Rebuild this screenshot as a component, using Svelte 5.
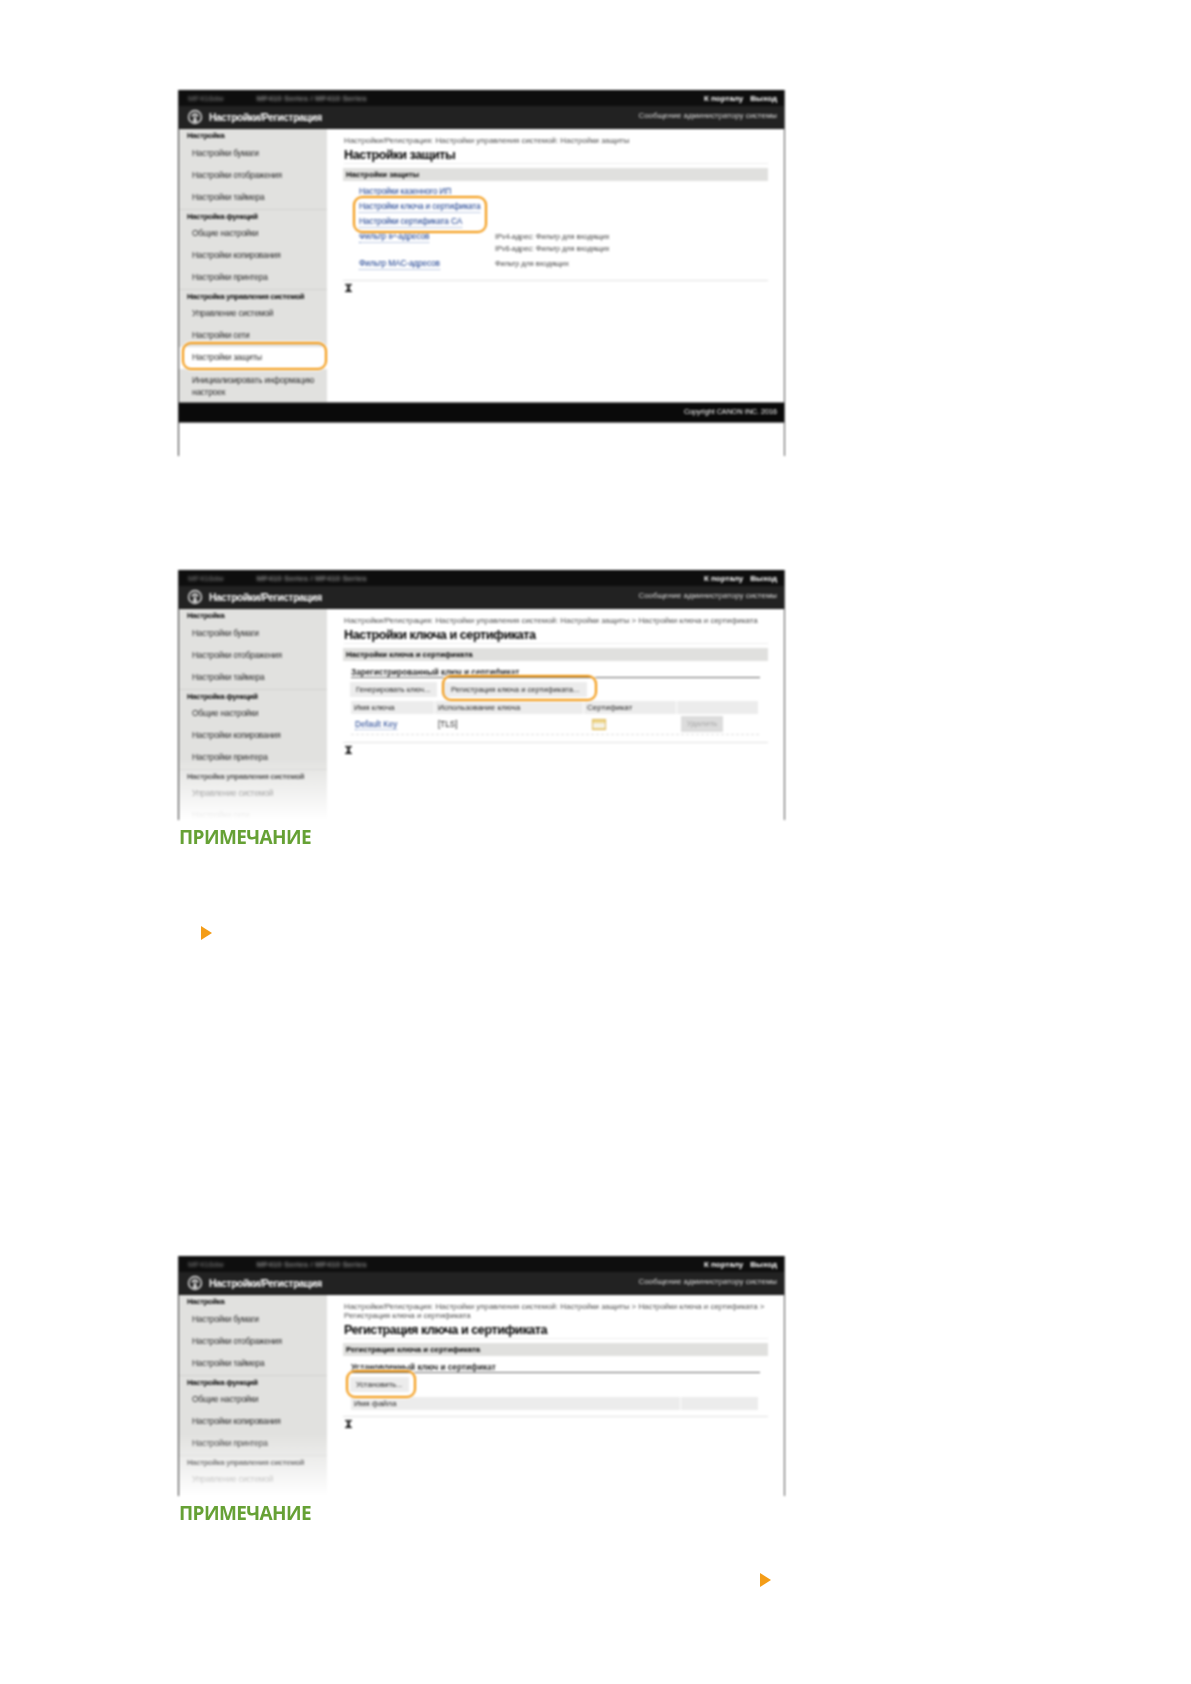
<script>
	const groups = [
		{ title: 'Настройка', items: ['Настройки бумаги', 'Настройки отображения', 'Настройки таймера'] },
		{ title: 'Настройка функций', items: ['Общие настройки', 'Настройки копирования', 'Настройки принтера'] },
		{
			title: 'Настройка управления системой',
			items: ['Управление системой', 'Настройки сети', 'Настройки защиты', 'Инициализировать информацию настроек']
		}
	];
	// how many menu items each crop of the screen still shows
	const visible = { full: 10, 'cut-a': 8, 'cut-b': 7 };
	const base = 'Настройки/Регистрация: Настройки управления системой: Настройки защиты';

	function itemsFor(kind, groupIndex) {
		const before = groups.slice(0, groupIndex).reduce((n, g) => n + g.items.length, 0);
		return groups[groupIndex].items.slice(0, Math.max(0, visible[kind] - before));
	}
</script>

{#snippet frame(kind, crumb, body)}
	<div class="shot {kind}">
		<div class="topbar">
			<span class="device"><span>MF416dw</span><span class="model">MF410 Series / MF410 Series</span></span>
			<span class="toplinks"><span>К порталу</span><span>Выход</span></span>
		</div>
		<div class="header">
			<svg class="logo" viewBox="0 0 16 16" width="16" height="16">
				<circle cx="8" cy="8" r="6.4" fill="none" stroke="#d4d4d4" stroke-width="1.6" />
				<path d="M8 4.2C9.8 4.2 11.4 5.6 11.8 7.6L9.6 7.6C9.4 6.8 8.8 6.3 8 6.3S6.6 6.8 6.4 7.6L4.2 7.6C4.6 5.6 6.2 4.2 8 4.2Z" fill="#e4e4e4" />
				<path d="M6.6 9.2H9.4L10.6 13.4H5.4Z" fill="#ccc" />
				<circle cx="8" cy="8.2" r="1" fill="#fff" />
			</svg>
			<span class="app-title">Настройки/Регистрация</span>
			<span class="admin">Сообщение администратору системы</span>
		</div>
		<div class="columns">
			<nav class="side">
				{#each groups as g, gi}
					<div class="side-head">{g.title}</div>
					{#each itemsFor(kind, gi) as item}
						<div class="side-item" class:wrap={item.startsWith('Иници')} class:sel={kind === 'full' && item === 'Настройки защиты'}>{item}</div>
					{/each}
				{/each}
			</nav>
			<div class="main">
				<div class="crumb">{crumb}</div>
				{@render body()}
			</div>
		</div>
		{#if kind === 'full'}
			<div class="footer">Copyright CANON INC. 2016</div>
		{/if}
	</div>
{/snippet}

{#snippet gotop()}
	<svg class="gotop" viewBox="0 0 7 8" width="7" height="8">
		<path d="M0 0H7V1H0ZM0 7H7V8H0ZM1 1.5H6L4 4 6 6.8H1L3 4Z" fill="#000" />
	</svg>
{/snippet}

{#snippet security()}
	<h2>Настройки защиты</h2>
	<div class="bar">Настройки защиты</div>
	<div class="links">
		<a>Настройки казенного ИП</a><span></span>
		<a>Настройки ключа и сертификата</a><span></span>
		<a>Настройки сертификата CA</a><span></span>
		<a>Фильтр IP-адресов</a><span class="desc">IPv4-адрес: Фильтр для входящих<br />IPv6-адрес: Фильтр для входящих</span>
		<a>Фильтр MAC-адресов</a><span class="desc">Фильтр для входящих</span>
	</div>
	<div class="rule r1"></div>
	{@render gotop()}
{/snippet}

{#snippet keys()}
	<h2>Настройки ключа и сертификата</h2>
	<div class="bar">Настройки ключа и сертификата</div>
	<div class="sub">Зарегистрированный ключ и сертификат</div>
	<div class="btns">
		<span class="btn b1">Генерировать ключ...</span>
		<span class="btn b2">Регистрация ключа и сертификата...</span>
	</div>
	<div class="tr th">
		<span class="c1">Имя ключа</span><span class="c2">Использование ключа</span><span class="c3">Сертификат</span><span class="c4"></span>
	</div>
	<div class="tr td">
		<span class="c1"><a>Default Key</a></span><span class="c2">[TLS]</span>
		<span class="c3"><i class="cert"></i></span>
		<span class="c4"><span class="del">Удалить</span></span>
	</div>
	<div class="rule r2"></div>
	{@render gotop()}
{/snippet}

{#snippet register()}
	<h2>Регистрация ключа и сертификата</h2>
	<div class="bar">Регистрация ключа и сертификата</div>
	<div class="sub">Установленный ключ и сертификат</div>
	<div class="btns"><span class="btn b3">Установить...</span></div>
	<div class="tr th file"><span class="f1">Имя файла</span><span class="f2"></span></div>
	<div class="rule r3"></div>
	{@render gotop()}
{/snippet}

<div class="page">
	<section class="fig">
		{@render frame('full', base, security)}
		<i class="oval o1"></i>
		<i class="oval o2"></i>
	</section>

	<section class="fig second">
		{@render frame('cut-a', base + ' > Настройки ключа и сертификата', keys)}
		<i class="oval o3"></i>
	</section>
	<h3 class="note">ПРИМЕЧАНИЕ</h3>
	<div class="arrow a1"></div>

	<section class="fig third">
		{@render frame('cut-b', base + ' > Настройки ключа и сертификата > Регистрация ключа и сертификата', register)}
		<i class="oval o4"></i>
	</section>
	<h3 class="note">ПРИМЕЧАНИЕ</h3>
	<div class="arrow a2"></div>
</div>

<style>
	:global(body) {
		margin: 0;
		background: #fff;
	}
	.page {
		height: 1684px;
		box-sizing: border-box;
		padding: 90px 0 0 178px;
		font-family: 'Liberation Sans', Arial, sans-serif;
	}
	.fig {
		position: relative;
		width: 607px;
		filter: blur(0.8px);
	}
	.second { margin-top: 114px; }
	.third { margin-top: 316px; }
	.shot {
		position: relative;
		box-sizing: border-box;
		overflow: hidden;
		border-left: 1px solid #333;
		border-right: 1px solid #555;
		background: #fff;
	}
	.full { height: 366px; }
	.cut-a { height: 250px; }
	.cut-b { height: 240px; }
	.cut-a::after,
	.cut-b::after {
		content: '';
		position: absolute;
		left: -1px;
		right: -1px;
		bottom: 0;
		height: 62px;
		background: linear-gradient(rgba(255, 255, 255, 0), #fff);
	}

	.topbar {
		display: flex;
		align-items: center;
		justify-content: space-between;
		height: 16px;
		margin: 0 -1px;
		padding: 0 8px 0 10px;
		background: #0e0e0e;
		font-size: 8px;
		color: #fff;
	}
	.device {
		display: flex;
		gap: 33px;
		font-size: 8.1px;
		color: #888;
		filter: blur(1px);
	}
	.model { font-weight: bold; }
	.toplinks {
		display: flex;
		gap: 7px;
		font-weight: bold;
	}
	.header {
		display: flex;
		align-items: center;
		height: 22px;
		margin: 0 -1px;
		padding: 0 8px 0 9px;
		background: #222;
		border-bottom: 1px solid #111;
	}
	.logo { margin-right: 6px; }
	.app-title {
		font-size: 10.2px;
		font-weight: bold;
		letter-spacing: -0.36px;
		color: #fff;
	}
	.admin {
		margin-left: auto;
		font-size: 7.9px;
		color: #ddd;
		padding-bottom: 3px;
	}

	.columns { display: flex; }
	.side {
		flex: none;
		width: 148px;
		height: 274px;
		background: #e1e1df;
		overflow: hidden;
	}
	.side-head {
		box-sizing: border-box;
		height: 14px;
		padding-left: 8px;
		border-top: 1px solid #d2d2d0;
		font-size: 7.6px;
		font-weight: bold;
		letter-spacing: -0.25px;
		line-height: 13px;
		color: #000;
	}
	.side-head:first-child { border-top: 0; }
	.side-item {
		display: flex;
		align-items: center;
		height: 22px;
		padding: 0 8px 2px 13px;
		box-sizing: border-box;
		font-size: 8.4px;
		letter-spacing: -0.22px;
		color: #2a2a2a;
	}
	.side-item.wrap {
		height: 34px;
		padding-bottom: 0;
		line-height: 12px;
	}
	.side-item.sel { background: #fff; }

	.main {
		flex: 1;
		min-width: 0;
		padding: 7px 16px 0 17px;
	}
	.crumb {
		font-size: 7.9px;
		line-height: 9px;
		color: #4a4a4a;
	}
	h2 {
		box-sizing: border-box;
		height: 16px;
		margin: 3px 0 4px;
		border-bottom: 1px solid #eee;
		font-size: 12.6px;
		font-weight: bold;
		letter-spacing: -0.44px;
		line-height: 14px;
		color: #000;
	}
	.bar {
		height: 13px;
		padding-left: 3px;
		margin-left: -1px;
		background: #e0e0de;
		font-size: 7.8px;
		font-weight: bold;
		line-height: 13px;
		color: #000;
	}
	a {
		color: #14398c;
		border-bottom: 1px dotted #7f97c8;
	}
	.links {
		display: grid;
		grid-template-columns: 136px 1fr;
		row-gap: 3px;
		align-items: start;
		padding: 5px 0 0 15px;
		font-size: 8.4px;
		letter-spacing: -0.18px;
		line-height: 12px;
	}
	.links a { justify-self: start; line-height: 11px; }
	.desc {
		font-size: 7.4px;
		letter-spacing: -0.08px;
		color: #444;
	}
	.rule { height: 0; border-top: 1px solid #e0e0e0; margin-left: -1px; }
	.r1 { margin-top: 10px; }
	.r2 { margin-top: 7px; }
	.r3 { margin-top: 6px; }
	.gotop {
		display: block;
		margin: 3px 0 0 1px;
	}

	.sub {
		box-sizing: border-box;
		height: 11px;
		margin: 6px 8px 0 7px;
		border-bottom: 1px solid #666;
		font-size: 8.2px;
		font-weight: bold;
		line-height: 11px;
		color: #222;
	}
	.btns {
		display: flex;
		gap: 5px;
		margin: 4px 8px 0 6px;
	}
	.btn {
		box-sizing: border-box;
		height: 15px;
		padding-left: 6px;
		background: #ececec;
		font-size: 7.6px;
		line-height: 15px;
		color: #222;
		white-space: nowrap;
		overflow: hidden;
	}
	.b1 { width: 87px; }
	.b2 { width: 145px; padding-left: 9px; }
	.b3 { width: 59px; }
	.tr {
		display: flex;
		margin: 0 9px 0 7px;
		font-size: 8px;
		color: #222;
	}
	.th {
		height: 13px;
		margin-top: 4px;
		line-height: 13px;
		color: #222;
	}
	.th > span {
		box-sizing: border-box;
		background: #ececec;
		border-right: 1px solid #fff;
		padding-left: 3px;
	}
	.c1 { width: 84px; padding-left: 3px; box-sizing: border-box; }
	.c2 { width: 149px; padding-left: 3px; box-sizing: border-box; }
	.c3 { width: 93px; padding-left: 3px; box-sizing: border-box; }
	.c4 { flex: 1; }
	.td {
		align-items: center;
		height: 20px;
		border-bottom: 1px dashed #e0e0e0;
		font-size: 8.2px;
	}
	.td .c1 { padding-left: 4px; }
	.td .c3 { padding-left: 8px; }
	.td .c4 { padding-left: 4px; }
	.cert {
		display: block;
		box-sizing: border-box;
		width: 14px;
		height: 11px;
		background: linear-gradient(#efd68a 0 3px, #f4f1e6 3px 8px, #efd68a 8px);
		border: 1px solid #ddb95a;
	}
	.del {
		display: block;
		width: 42px;
		height: 16px;
		background: #dcdcdc;
		font-size: 8px;
		line-height: 16px;
		text-align: center;
		color: #a8a8a8;
	}
	.file { margin-top: 5px; }
	.f1 { width: 330px; }
	.f2 { flex: 1; }

	.footer {
		position: absolute;
		left: -1px;
		right: -1px;
		top: 312px;
		height: 19px;
		padding-right: 8px;
		background: #0a0a0a;
		border-top: 1px solid #777;
		border-bottom: 1px solid #777;
		font-size: 7.2px;
		line-height: 18px;
		text-align: right;
		color: #fff;
	}

	.oval {
		position: absolute;
		box-sizing: border-box;
		border: 2.5px solid #f39200;
		border-radius: 9px;
		box-shadow: 0 0 0 1px #fff;
	}
	.o1 { left: 175px; top: 106px; width: 134px; height: 37px; }
	.o2 { left: 4px; top: 252px; width: 145px; height: 28px; }
	.o3 { left: 264px; top: 105px; width: 155px; height: 26px; }
	.o4 { left: 168px; top: 114px; width: 70px; height: 28px; }

	.note {
		margin: 5px 0 0 1px;
		font-family: 'Open Sans', sans-serif;
		font-size: 19px;
		font-weight: 700;
		letter-spacing: -0.6px;
		line-height: 24px;
		color: #66a135;
		filter: blur(0.5px);
	}
	.arrow {
		width: 0;
		height: 0;
		border-left: 11px solid #f49d18;
		border-top: 7.5px solid transparent;
		border-bottom: 7.5px solid transparent;
	}
	.a1 { margin: 77px 0 0 23px; }
	.a2 { margin: 48px 0 0 582px; }
</style>
